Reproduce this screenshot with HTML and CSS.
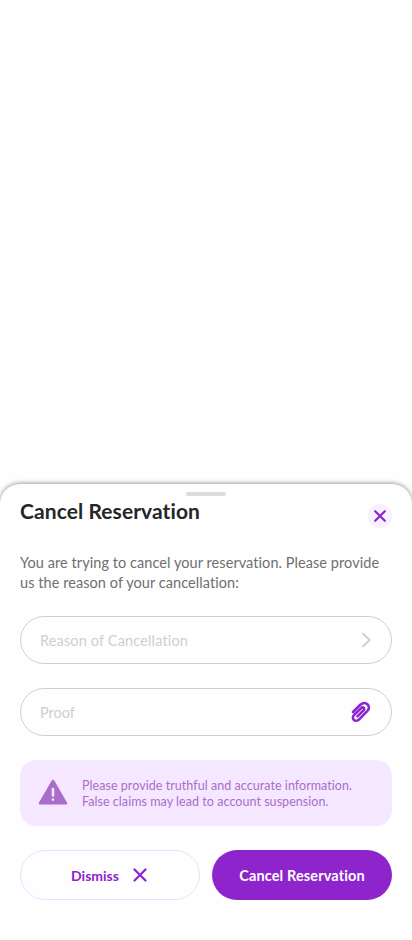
FILE: index.html
```html
<!DOCTYPE html>
<html lang="en">
<head>
<meta charset="utf-8">
<meta name="viewport" content="width=device-width, initial-scale=1">
<title>Cancel Reservation</title>
<link rel="stylesheet" href="styles.css">
</head>
<body>
<main class="sheet">
  <div class="handle"></div>
  <header class="header">
    <h1 class="title">Cancel Reservation</h1>
    <button class="close" aria-label="Close">
      <svg width="12" height="12" viewBox="0 0 12 12"><path d="M1.2 1.2 10.8 10.8M10.8 1.2 1.2 10.8"/></svg>
    </button>
  </header>
  <p class="intro">You are trying to cancel your reservation. Please provide<br>us the reason of your cancellation:</p>
  <div class="field">
    <span class="reason">Reason of Cancellation</span>
    <svg class="chevron" width="10" height="16" viewBox="0 0 10 16"><path d="M2 1.6 8.6 8 2 14.4"/></svg>
  </div>
  <div class="field">
    <span class="proof">Proof</span>
    <svg class="clip" width="20" height="22" viewBox="0 0 20 22"><path d="M2 11 9.3 3.8C11.5 1.7 14.4 1.3 16.4 3.2C18.6 5.3 18.4 7.9 16.4 9.9L8.2 18.3C6.6 20 4.2 20.3 2.8 18.9C1.4 17.5 1.7 15.4 3.2 13.9L10.2 7.1C11 6.3 12.1 6.1 12.8 6.8C13.5 7.5 13.3 8.6 12.5 9.4L6.4 15.4"/></svg>
  </div>
  <div class="alert">
    <svg class="warning" width="30" height="27" viewBox="0 0 30 27"><path class="triangle" d="M15 2 28 24.3H2Z"/><path class="mark" d="M15 10v6.4M15 20.5v.1"/></svg>
    <p class="alert-text">Please provide truthful and accurate information.<br>False claims may lead to account suspension.</p>
  </div>
  <div class="actions">
    <button class="button dismiss"><span>Dismiss</span><svg width="14" height="14" viewBox="0 0 14 14"><path d="M1.5 1.5 12.5 12.5M12.5 1.5 1.5 12.5"/></svg></button>
    <button class="button confirm"><span>Cancel Reservation</span></button>
  </div>
</main>
</body>
</html>
```
FILE: styles.css
```css
* { box-sizing: border-box; }
body {
  margin: 0;
  height: 940px;
  padding-top: 484px;
  background: #fefefe;
  font-family: Lato, "Open Sans", sans-serif;
  font-variant-ligatures: none;
  overflow: hidden;
}
h1, p { margin: 0; }
button { border: 0; padding: 0; font: inherit; }
svg { display: block; flex: none; fill: none; stroke: #8e24cc; stroke-width: 2.2; stroke-linecap: round; stroke-linejoin: round; }
span, h1, p { white-space: nowrap; }
.sheet {
  height: 456px;
  padding: 8px 20px 0;
  border-radius: 20px 20px 0 0;
  background: #fefefe;
  box-shadow: 0 -1px 4px rgba(0, 0, 0, .38);
}
.handle { width: 40px; height: 4px; margin: 0 auto; border-radius: 2px; background: #dcdcdc; }
.header { display: flex; justify-content: space-between; height: 57px; }
.title { margin-top: 2px; font-size: 21px; line-height: 26px; font-weight: 700; letter-spacing: .08px; color: #252626; }
.close { display: grid; place-items: center; width: 24px; height: 24px; margin-top: 8px; border-radius: 50%; background: #f8efff; }
.intro { height: 40px; margin-bottom: 23px; font-size: 14.5px; line-height: 20px; letter-spacing: .065px; color: #6f6f6f; }
.field {
  display: flex;
  align-items: center;
  justify-content: space-between;
  height: 48px;
  margin-bottom: 24px;
  padding: 0 20px 0 19px;
  border: 1px solid #cfcfcf;
  border-radius: 24px;
  font-size: 14.5px;
  color: #cfcfcf;
}
.reason { letter-spacing: .15px; }
.chevron { stroke: #cfcfcf; stroke-width: 2; }
.clip { stroke-width: 2.6; }
.alert { display: flex; align-items: center; gap: 14px; height: 66px; margin-bottom: 24px; padding: 2px 18px 0; border-radius: 16px; background: #f5e7ff; }
.warning { margin-top: -4px; }
.triangle { fill: #aa6dcb; stroke: #aa6dcb; stroke-width: 2.6; }
.mark { stroke: #f5e7ff; stroke-width: 2.6; }
.alert-text { font-size: 12.5px; line-height: 16px; letter-spacing: .05px; color: #aa6dcb; }
.actions { display: grid; grid-template-columns: 1fr 1fr; gap: 12px; }
.button { display: flex; align-items: center; justify-content: center; height: 50px; border-radius: 25px; font-size: 14px; font-weight: 700; }
.dismiss { gap: 14px; padding-right: 2px; border: 1px solid #efdcff; background: #fefefe; color: #8e24cc; }
.confirm { background: #8e24cc; color: #fefefe; font-size: 14.5px; letter-spacing: .12px; }
```
